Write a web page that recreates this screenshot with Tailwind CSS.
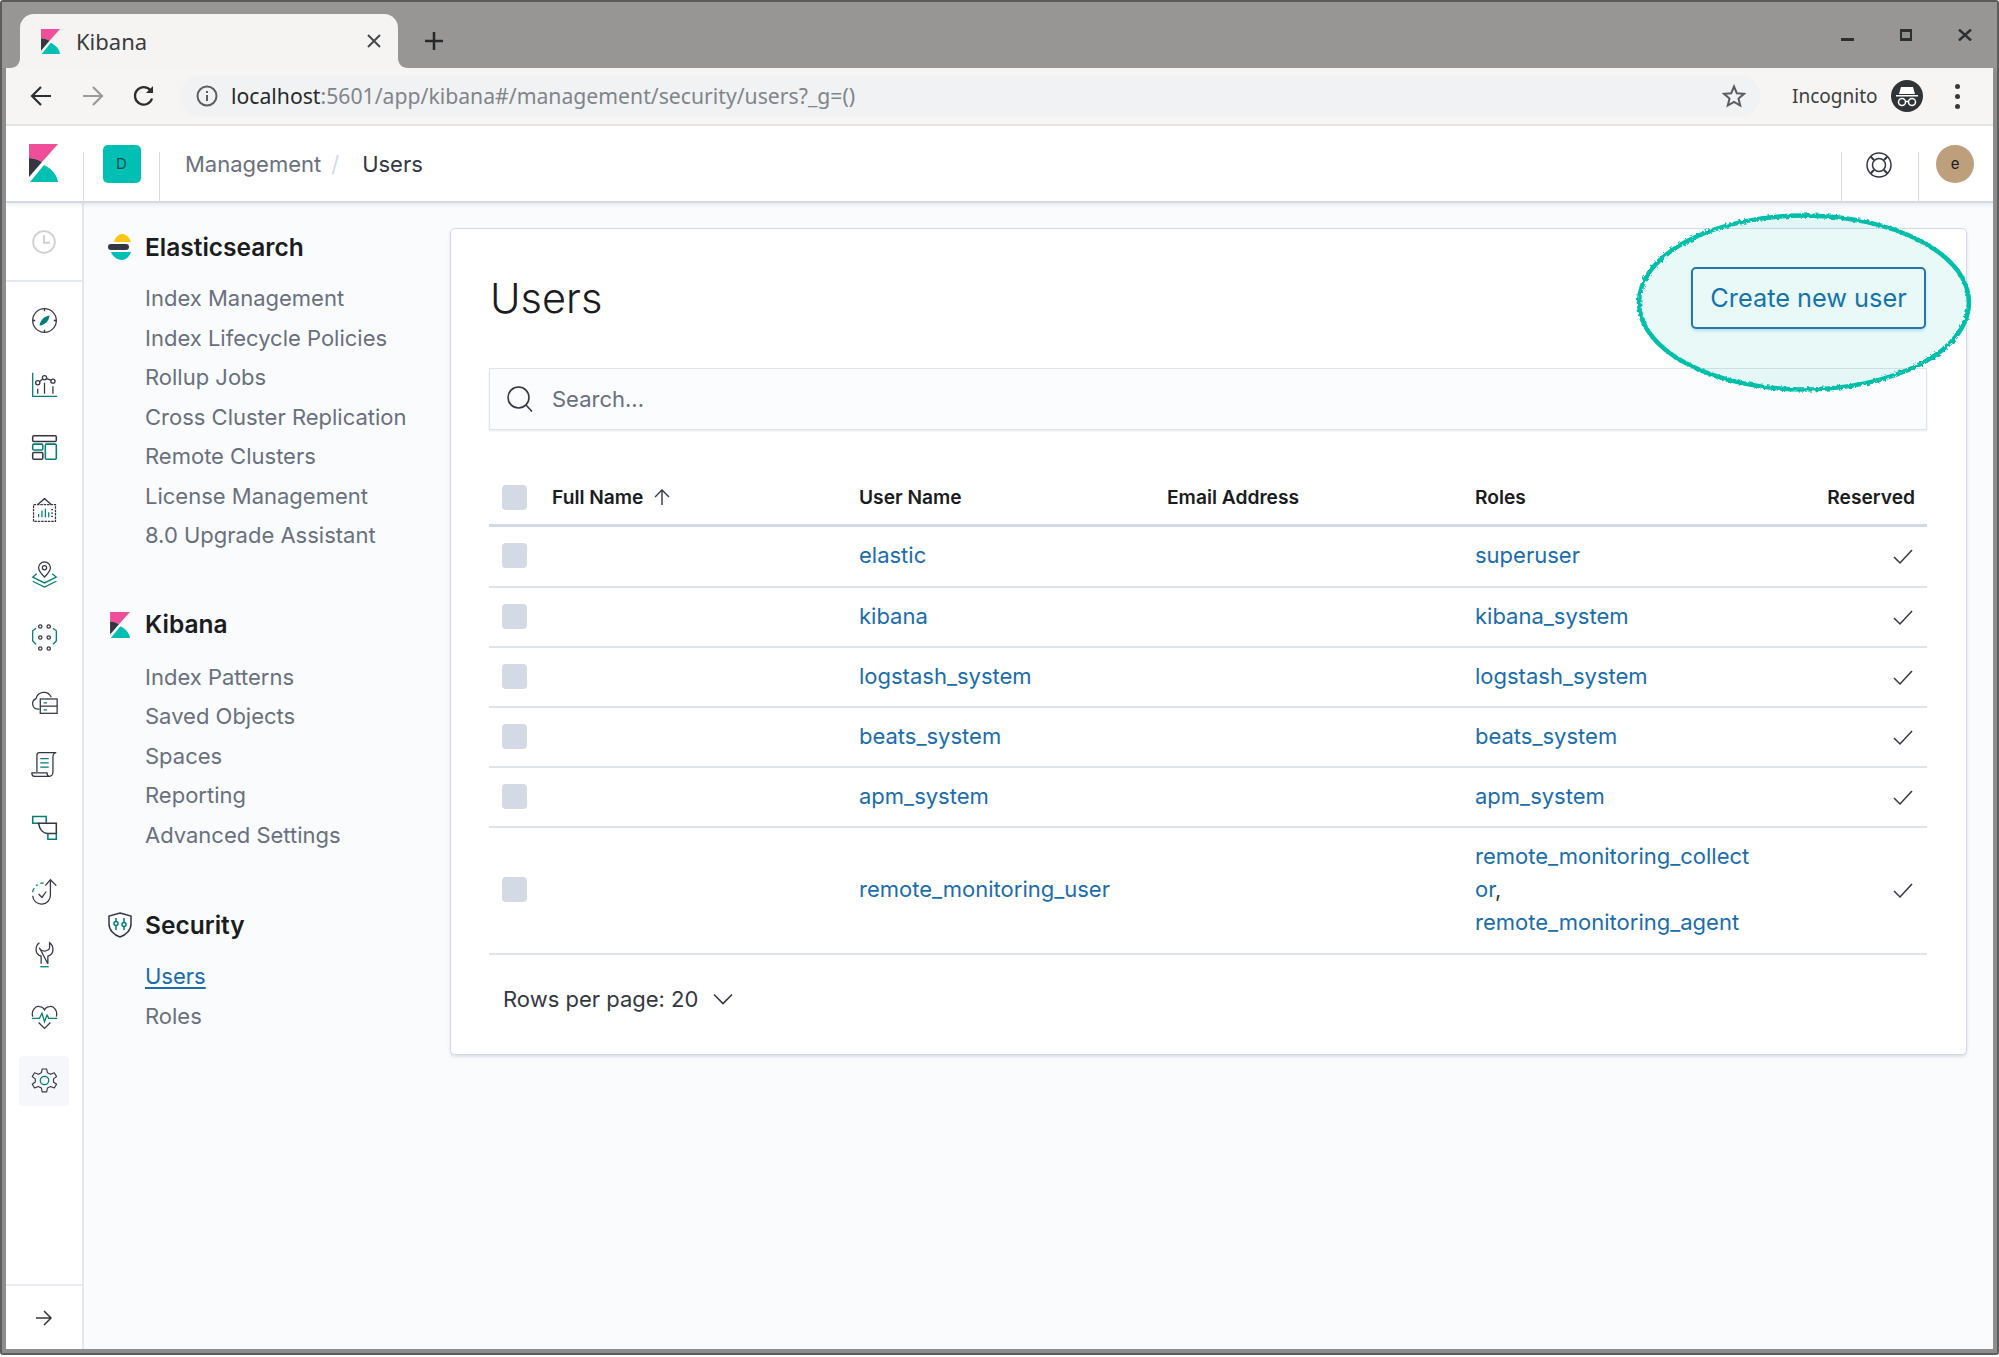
<!DOCTYPE html>
<html lang="en">
<head>
  <meta charset="UTF-8">
  <title>Kibana</title>
  <script src="https://cdn.jsdelivr.net/npm/@tailwindcss/browser@4"></script>
</head>
<body class="bg-white font-['Inter',sans-serif]">
<div class="relative w-[1999px] h-[1357px] overflow-hidden">

  <!-- Browser window -->
  <div class="w-[1999px] h-[1355px] border-2 border-[#5c5c5c] rounded-[3px]">
    <div class="h-full border-x-4 border-b-4 border-[#8d8d8d] flex flex-col bg-[#fafbfd]">

      <!-- Tab strip -->
      <div class="h-[66px] shrink-0 bg-[#979694] flex items-end -mx-[4px] pl-[18px] pr-[25px]">
        <div class="relative w-[378px] h-[54px] bg-[#f5f4f2] rounded-t-[14px] flex items-center pl-[21px] pr-[16px] font-['Noto_Sans',sans-serif]">
          <svg class="absolute -left-[10px] bottom-0 w-[10px] h-[10px]" viewBox="0 0 10 10"><path d="M10 0V10H0C6 10 10 6 10 0Z" fill="#f5f4f2"/></svg>
          <svg class="absolute -right-[10px] bottom-0 w-[10px] h-[10px]" viewBox="0 0 10 10"><path d="M0 0V10H10C4 10 0 6 0 0Z" fill="#f5f4f2"/></svg>
          <svg class="w-[19px] h-[25px]" viewBox="0 0 29 38"><path d="M0 0H29L13 18C9 15.500 5 14.500 0 14Z" fill="#f04e98"/><path d="M0 14C5 14.500 9 15.500 13 18L0 33Z" fill="#343741"/><path d="M1 38L15 21C23 25 28 31 29 38Z" fill="#00bfb3"/></svg>
          <span class="ml-[16px] text-[22px] text-[#3a3b3d]">Kibana</span>
          <svg class="ml-auto w-[16px] h-[16px]" viewBox="0 0 16 16" fill="none" stroke="#46484b" stroke-width="2"><path d="M2 2L14 14M14 2L2 14"/></svg>
        </div>
        <svg class="ml-[26px] mb-[17px] w-[20px] h-[20px]" viewBox="0 0 20 20" fill="none" stroke="#26282a" stroke-width="2.500"><path d="M10 1V19M1 10H19"/></svg>
        <div class="ml-auto self-start pt-[27px] flex items-start">
          <div class="w-[13px] h-[3px] bg-[#2d2e30] mt-[9px] mr-[46px]"></div>
          <div class="w-[12px] h-[12px] border-[3px] border-x-[2px] border-[#2d2e30] bg-[#8f8f8e] mr-[46px]"></div>
          <svg class="w-[14px] h-[12px]" viewBox="0 0 14 12" fill="none" stroke="#2d2e30" stroke-width="2.400"><path d="M1 0.500L13 11.500M13 0.500L1 11.500"/></svg>
        </div>
      </div>

      <!-- Toolbar -->
      <div class="h-[58px] shrink-0 bg-[#f6f5f3] border-b-2 border-[#e8e6e1] flex items-center pl-[24px] font-['Noto_Sans',sans-serif]">
        <svg class="w-[22px] h-[22px]" viewBox="0 0 22 22" fill="none" stroke="#2c2d2f" stroke-width="2.200"><path d="M21 11H2M11 2L2 11L11 20"/></svg>
        <svg class="ml-[30px] w-[22px] h-[22px]" viewBox="0 0 22 22" fill="none" stroke="#9a9a99" stroke-width="2.200"><path d="M1 11H20M11 2L20 11L11 20"/></svg>
        <svg class="ml-[28px] w-[24px] h-[24px]" viewBox="0 0 24 24" fill="none" stroke="#2c2d2f" stroke-width="2.300"><path d="M20 14.500A8.700 8.700 0 1 1 18.500 6.500"/><path d="M21 2V9H14" fill="#2c2d2f" stroke="none"/></svg>
        <div class="ml-[24px] w-[1581px] h-[42px] rounded-full bg-[#f1f2f3] flex items-center pl-[16px] pr-[15px]">
          <svg class="w-[22px] h-[22px]" viewBox="0 0 22 22" fill="none" stroke="#5b5e62" stroke-width="2"><circle cx="11" cy="11" r="9.500"/><path d="M11 10V16M11 6V8"/></svg>
          <span class="ml-[13px] text-[21.200px] text-[#27292b]">localhost<span class="text-[#80858a]">:5601/app/kibana#/management/security/users?_g=()</span></span>
          <svg class="ml-auto w-[24px] h-[24px]" viewBox="0 0 24 24" fill="none" stroke="#595c60" stroke-width="2"><path d="M12 2.500L14.800 9.200L22 9.800L16.500 14.500L18.200 21.500L12 17.800L5.800 21.500L7.500 14.500L2 9.800L9.200 9.200Z"/></svg>
        </div>
        <span class="ml-[31px] text-[19px] text-[#3c3e41]">Incognito</span>
        <svg class="ml-[14px] w-[32px] h-[32px]" viewBox="0 0 32 32"><circle cx="16" cy="16" r="16" fill="#303437"/><path d="M10 7H22L24 14H8Z" fill="#fff"/><path d="M5 15H27V16.500H5Z" fill="#fff"/><circle cx="11" cy="22" r="3.500" fill="none" stroke="#fff" stroke-width="1.500"/><circle cx="21" cy="22" r="3.500" fill="none" stroke="#fff" stroke-width="1.500"/><path d="M14 21.500H18" stroke="#fff" stroke-width="1.500"/></svg>
        <div class="ml-[32px] flex flex-col gap-[5px]">
          <div class="w-[5px] h-[5px] rounded-full bg-[#37393c]"></div>
          <div class="w-[5px] h-[5px] rounded-full bg-[#37393c]"></div>
          <div class="w-[5px] h-[5px] rounded-full bg-[#37393c]"></div>
        </div>
      </div>

      <!-- Kibana header -->
      <div class="h-[77px] shrink-0 bg-white border-b-2 border-[#d3dae6] flex items-stretch shadow-[0_2px_4px_rgba(152,162,179,0.2)] relative z-10">
        <div class="w-[77px] flex justify-center pt-[18px]">
          <svg class="w-[29px] h-[38px] -ml-[2px]" viewBox="0 0 29 38"><path d="M0 0H29L13 18C9 15.500 5 14.500 0 14Z" fill="#f04e98"/><path d="M0 14C5 14.500 9 15.500 13 18L0 33Z" fill="#343741"/><path d="M1 38L15 21C23 25 28 31 29 38Z" fill="#00bfb3"/></svg>
        </div>
        <div class="w-[77px] mt-[26px] border-x border-[#d3dae6] flex justify-center items-start">
          <div class="w-[38px] h-[38px] -mt-[7px] rounded-[5px] bg-[#00bfb3] flex items-center justify-center text-[15px] text-[#0d4f4a]">D</div>
        </div>
        <div class="flex items-center pl-[25px] pt-[2px] text-[22px]">
          <span class="text-[#69707d]">Management</span>
          <span class="ml-[10px] text-[#d3dae6]">/</span>
          <span class="ml-[23px] text-[#343741]">Users</span>
        </div>
        <div class="ml-auto w-[77px] mt-[26px] border-l border-[#d3dae6] flex justify-center items-start">
          <svg class="w-[26px] h-[26px] -ml-[3px]" viewBox="0 0 26 26" fill="none" stroke="#343741" stroke-width="1.500"><circle cx="13" cy="13" r="12"/><circle cx="13" cy="13" r="6.500"/><path d="M8 8L4.500 4.500M18 8L21.500 4.500M8 18L4.500 21.500M18 18L21.500 21.500" stroke-width="2"/></svg>
        </div>
        <div class="w-[75px] mt-[26px] border-l border-[#d3dae6] flex items-start pl-[17px]">
          <div class="w-[38px] h-[38px] shrink-0 -mt-[7px] rounded-full bg-[#bd9f7c] flex items-center justify-center text-[15px] text-[#1a1c21]">e</div>
        </div>
      </div>

      <div class="flex-1 flex min-h-0">

        <!-- Icon rail -->
        <div class="w-[78px] shrink-0 bg-white border-r-2 border-[#e3e7ef] flex flex-col items-center">
          <div class="w-full h-[79px] border-b-2 border-[#e3e7ef] flex items-center justify-center">
            <svg class="w-[24px] h-[24px]" viewBox="0 0 32 32" fill="none" stroke="#cfd1d4" stroke-width="2.500"><circle cx="16" cy="16" r="14.500"/><path d="M16 7V17H24"/></svg>
          </div>
          <div class="pt-[7px] flex flex-col items-center w-full">
            <!-- Discover -->
            <div class="h-[63.400px] flex items-center"><svg class="w-[27px] h-[27px]" viewBox="0 0 32 32" fill="none" stroke="#343741" stroke-width="1.500"><circle cx="16" cy="16" r="14"/><path d="M16 2V5M16 27V30M2 16H5M27 16H30"/><path d="M10 22C11 16 15 11 22 10C21 17 17 21 10 22Z" fill="#017d73" stroke="none"/></svg></div>
            <!-- Visualize -->
            <div class="h-[63.400px] flex items-center"><svg class="w-[27px] h-[27px]" viewBox="0 0 32 32" fill="none" stroke="#343741" stroke-width="1.500"><path d="M2 2V30H31" stroke="#017d73"/><circle cx="8" cy="14" r="2.500"/><circle cx="16" cy="8" r="2.500"/><circle cx="26" cy="12" r="2.500"/><path d="M10 12.500L14 9.500M18.500 9L24 11M8 21V27M16 14V27M26 18V27"/></svg></div>
            <!-- Dashboard -->
            <div class="h-[63.400px] flex items-center"><svg class="w-[27px] h-[27px]" viewBox="0 0 32 32" fill="none" stroke="#343741" stroke-width="1.800"><rect x="2" y="2" width="28" height="7" rx="1.500"/><rect x="2" y="12" width="12" height="7" rx="1.500" stroke="#017d73"/><rect x="2" y="22" width="12" height="8" rx="1.500"/><rect x="17" y="12" width="13" height="18" rx="1.500" stroke="#017d73"/></svg></div>
            <!-- Canvas -->
            <div class="h-[63.400px] flex items-center"><svg class="w-[27px] h-[27px]" viewBox="0 0 32 32" fill="none" stroke="#343741" stroke-width="1.500"><path d="M3 9H29V29H3Z" stroke-dasharray="3 1"/><path d="M8 9L16 2L24 9"/><path d="M9 24V20M13 24V16M17 24V14M21 24V18" stroke="#017d73"/><path d="M24 15H26M24 19H26M24 23H26"/></svg></div>
            <!-- Maps -->
            <div class="h-[63.400px] flex items-center"><svg class="w-[27px] h-[27px]" viewBox="0 0 32 32" fill="none" stroke="#343741" stroke-width="1.500"><path d="M16 19C11 14 9 11 9 8A7 7 0 0 1 23 8C23 11 21 14 16 19Z"/><circle cx="16" cy="8" r="2.500"/><path d="M7 15L2 19L16 26L30 19L25 15M2 24L16 31L30 24" stroke="#017d73"/></svg></div>
            <!-- Machine Learning -->
            <div class="h-[63.400px] flex items-center"><svg class="w-[27px] h-[27px]" viewBox="0 0 32 32" fill="none" stroke="#343741" stroke-width="1.500"><circle cx="11" cy="3" r="2"/><circle cx="21" cy="3" r="2"/><circle cx="11" cy="16" r="2"/><circle cx="21" cy="16" r="2"/><circle cx="11" cy="29" r="2"/><circle cx="21" cy="29" r="2"/><path d="M6 5L2 8V20L6 24M26 5L30 8V20L26 24" stroke="#017d73"/></svg></div>
            <!-- Infrastructure -->
            <div class="h-[63.400px] flex items-center"><svg class="w-[27px] h-[27px]" viewBox="0 0 32 32" fill="none" stroke="#343741" stroke-width="1.500"><path d="M10 25H8A6.500 6.500 0 0 1 6 12.500C8 4 20 2 24 11"/><rect x="11" y="13" width="20" height="17"/><path d="M11 21.500H31"/><path d="M15 17.500H19M15 26H19" stroke="#017d73"/></svg></div>
            <!-- Logs -->
            <div class="h-[63.400px] flex items-center"><svg class="w-[27px] h-[27px]" viewBox="0 0 32 32" fill="none" stroke="#343741" stroke-width="1.500"><path d="M7 25V5A3 3 0 0 1 10 2H30C27 2 26 4 26 8V25C26 28 24 30 22 30H4C2 30 1 28 1 26H19C19 28 20 30 22 30"/><path d="M11 9H21M11 14H21M11 19H21" stroke="#017d73"/></svg></div>
            <!-- APM -->
            <div class="h-[63.400px] flex items-center"><svg class="w-[27px] h-[27px]" viewBox="0 0 32 32" fill="none" stroke="#343741" stroke-width="1.800"><path d="M10 11H2V3H18V11" stroke="#017d73"/><path d="M9 11H30V23H20C14 23 10 18 9 11Z"/><path d="M20 23V30H30V23" stroke="#017d73"/></svg></div>
            <!-- Uptime -->
            <div class="h-[63.400px] flex items-center"><svg class="w-[27px] h-[27px]" viewBox="0 0 32 32" fill="none" stroke="#343741" stroke-width="1.500"><path d="M23 3V20A10.500 10.500 0 0 1 2 21"/><path d="M17 9L23 2L30 9"/><path d="M2 17C2 15 3 13 4 12M6 9L8 8M11 6H15" stroke="#017d73"/><path d="M9 19L13 23L18 16"/></svg></div>
            <!-- Dev Tools -->
            <div class="h-[63.400px] flex items-center"><svg class="w-[27px] h-[27px]" viewBox="0 0 32 32" fill="none" stroke="#343741" stroke-width="1.500"><path d="M10 2C7 4 6 7 6 10C6 14 9 17 12 18V27M20 27V18C23 17 26 14 26 10C26 7 25 4 22 2V8C22 10 19 12 16 12C13 12 10 10 10 8Z"/><path d="M11 30.500H21" stroke="#017d73"/></svg></div>
            <!-- Monitoring -->
            <div class="h-[63.400px] flex items-center"><svg class="w-[27px] h-[27px]" viewBox="0 0 32 32" fill="none" stroke="#343741" stroke-width="1.500"><path d="M2 15C0 8 5 2 10 3C13 3 15 5 16 7C17 5 19 3 22 3C27 2 32 8 30 15"/><path d="M1 17H10L13 11L16 21L19 13L21 17H31" stroke="#017d73"/><path d="M9 22L16 29L23 22"/></svg></div>
            <!-- Management -->
            <div class="h-[50px] mt-[6px] w-[50px] rounded-[4px] bg-[#f5f7fa] flex items-center justify-center"><svg class="w-[27px] h-[27px]" viewBox="0 0 32 32" fill="none" stroke="#343741" stroke-width="1.500"><path d="M13 1H19L20 6L24 8L29 6L32 11L28 14V18L32 21L29 26L24 24L20 26L19 31H13L12 26L8 24L3 26L0 21L4 18V14L0 11L3 6L8 8L12 6Z" stroke-linejoin="round" transform="translate(1.500 1.500) scale(.9)"/><circle cx="16" cy="16" r="5" stroke="#017d73"/></svg></div>
          </div>
          <div class="mt-auto w-full h-[65px] border-t-2 border-[#ebedf2] flex items-center justify-center">
            <svg class="w-[18px] h-[18px]" viewBox="0 0 18 18" fill="none" stroke="#343741" stroke-width="1.500"><path d="M1 9H16M9 2L16 9L9 16"/></svg>
          </div>
        </div>

        <!-- Side nav -->
        <div class="w-[366px] shrink-0 pl-[24px] pt-[24px]">
          <div class="h-[40px] flex items-center">
            <svg class="w-[24px] h-[26px]" viewBox="0 0 24 26"><path d="M6 8C7 3 11 0 14 0C17 0 21 2 23 8Z" fill="#fec514"/><rect x="0" y="10" width="21" height="6" rx="3" fill="#343741"/><path d="M3 18H23C21 23 18 26 14 26C9 26 5 23 3 18Z" fill="#00bfb3"/></svg>
            <span class="ml-[13px] text-[24.500px] font-semibold text-[#1a1c21]">Elasticsearch</span>
          </div>
          <div class="mt-[12px] pl-[37px] text-[22px] text-[#69707d] flex flex-col">
            <span class="h-[39.500px] leading-[39.500px]">Index Management</span>
            <span class="h-[39.500px] leading-[39.500px]">Index Lifecycle Policies</span>
            <span class="h-[39.500px] leading-[39.500px]">Rollup Jobs</span>
            <span class="h-[39.500px] leading-[39.500px]">Cross Cluster Replication</span>
            <span class="h-[39.500px] leading-[39.500px]">Remote Clusters</span>
            <span class="h-[39.500px] leading-[39.500px]">License Management</span>
            <span class="h-[39.500px] leading-[39.500px]">8.0 Upgrade Assistant</span>
          </div>
          <div class="mt-[49px] h-[40px] flex items-center">
            <svg class="w-[22px] h-[26px] ml-[1px]" viewBox="0 0 29 38"><path d="M0 0H29L13 18C9 15.500 5 14.500 0 14Z" fill="#f04e98"/><path d="M0 14C5 14.500 9 15.500 13 18L0 33Z" fill="#343741"/><path d="M1 38L15 21C23 25 28 31 29 38Z" fill="#00bfb3"/></svg>
            <span class="ml-[14px] text-[24.500px] font-semibold text-[#1a1c21]">Kibana</span>
          </div>
          <div class="mt-[13px] pl-[37px] text-[22px] text-[#69707d] flex flex-col">
            <span class="h-[39.500px] leading-[39.500px]">Index Patterns</span>
            <span class="h-[39.500px] leading-[39.500px]">Saved Objects</span>
            <span class="h-[39.500px] leading-[39.500px]">Spaces</span>
            <span class="h-[39.500px] leading-[39.500px]">Reporting</span>
            <span class="h-[39.500px] leading-[39.500px]">Advanced Settings</span>
          </div>
          <div class="mt-[50px] h-[40px] flex items-center">
            <svg class="w-[24px] h-[26px]" viewBox="0 0 24 26" fill="none" stroke="#343741" stroke-width="1.500"><path d="M12 1L23 4V12C23 18 18 23 12 25C6 23 1 18 1 12V4Z"/><path d="M8 6V9M8 14V18M16 6V10M16 15V18" stroke="#017d73"/><circle cx="8" cy="11.500" r="2" stroke="#017d73"/><circle cx="16" cy="12.500" r="2" stroke="#017d73"/></svg>
            <span class="ml-[13px] text-[24.500px] font-semibold text-[#1a1c21]">Security</span>
          </div>
          <div class="mt-[12px] pl-[37px] text-[22px] text-[#69707d] flex flex-col">
            <span class="h-[39.500px] leading-[39.500px] text-[#1a6cab] underline underline-offset-[3px]">Users</span>
            <span class="h-[39.500px] leading-[39.500px]">Roles</span>
          </div>
        </div>

        <!-- Panel -->
        <div class="w-[1517px] h-[827px] shrink-0 mt-[25px] bg-white border border-[#d3dae6] rounded-[5px] shadow-[0_2px_3px_rgba(152,162,179,0.3)] px-[40px] pt-[38px]">
          <div class="flex items-center justify-between h-[62px]">
            <h1 class="-ml-[1px] text-[41.500px] font-light text-[#1a1c21]">Users</h1>
            <button class="w-[235px] h-[62px] rounded-[5px] border-2 border-[#2a6fa8] text-[25.300px] text-[#1a6cab] shadow-[0_2px_3px_rgba(0,107,180,0.2)]">Create new user</button>
          </div>
          <div class="mt-[39px] w-[1438px] -ml-[2px] h-[62px] bg-[#fbfcfd] border border-[#e0e3e9] shadow-[0_1px_2px_rgba(152,162,179,0.25)] flex items-center pl-[17px] text-[22px] text-[#69707d]">
            <svg class="w-[26px] h-[26px]" viewBox="0 0 26 26" fill="none" stroke="#343741" stroke-width="1.600"><circle cx="11.500" cy="11.500" r="10.500"/><path d="M19 19L25 25.500"/></svg>
            <span class="ml-[19px]">Search...</span>
          </div>
          <table class="mt-[35px] w-[1438px] -ml-[2px] table-fixed text-[22px] text-[#1a6cab] border-collapse">
            <colgroup>
              <col class="w-[52px]">
              <col class="w-[307px]">
              <col class="w-[308px]">
              <col class="w-[308px]">
              <col class="w-[307px]">
              <col class="w-[156px]">
            </colgroup>
            <thead>
              <tr class="h-[60px] border-b-[3px] border-[#d3dae6] text-[19.200px] font-semibold text-[#1a1c21] text-left">
                <th class="pl-[13px] pt-[6px]"><div class="w-[25px] h-[25px] rounded-[4px] bg-[#d3dae6]"></div></th>
                <th class="px-[11px] pt-[6px] font-semibold"><span class="inline-flex items-center gap-[10px]">Full Name <svg class="w-[18px] h-[18px]" viewBox="0 0 18 18" fill="none" stroke="#343741" stroke-width="1.400"><path d="M9 17V2M2 9L9 2L16 9"/></svg></span></th>
                <th class="px-[11px] pt-[6px] font-semibold">User Name</th>
                <th class="px-[11px] pt-[6px] font-semibold">Email Address</th>
                <th class="px-[11px] pt-[6px] font-semibold">Roles</th>
                <th class="px-[12px] pt-[6px] font-semibold text-right">Reserved</th>
              </tr>
            </thead>
            <tbody class="[&_td]:pb-[2px]">
              <tr class="h-[62px] border-b-2 border-[#dfe3ea]">
                <td class="pl-[13px]"><div class="w-[25px] h-[25px] rounded-[4px] bg-[#d3dae6]"></div></td>
                <td class="px-[11px]"></td><td class="px-[11px]">elastic</td><td class="px-[11px]"></td><td class="px-[11px]">superuser</td>
                <td class="pr-[14px] text-right"><svg class="inline w-[20px] h-[16px]" viewBox="0 0 20 16" fill="none" stroke="#343741" stroke-width="1.500"><path d="M1 8L7 14L19 1"/></svg></td>
              </tr>
              <tr class="h-[60px] border-b-2 border-[#dfe3ea]">
                <td class="pl-[13px]"><div class="w-[25px] h-[25px] rounded-[4px] bg-[#d3dae6]"></div></td>
                <td class="px-[11px]"></td><td class="px-[11px]">kibana</td><td class="px-[11px]"></td><td class="px-[11px]">kibana_system</td>
                <td class="pr-[14px] text-right"><svg class="inline w-[20px] h-[16px]" viewBox="0 0 20 16" fill="none" stroke="#343741" stroke-width="1.500"><path d="M1 8L7 14L19 1"/></svg></td>
              </tr>
              <tr class="h-[60px] border-b-2 border-[#dfe3ea]">
                <td class="pl-[13px]"><div class="w-[25px] h-[25px] rounded-[4px] bg-[#d3dae6]"></div></td>
                <td class="px-[11px]"></td><td class="px-[11px]">logstash_system</td><td class="px-[11px]"></td><td class="px-[11px]">logstash_system</td>
                <td class="pr-[14px] text-right"><svg class="inline w-[20px] h-[16px]" viewBox="0 0 20 16" fill="none" stroke="#343741" stroke-width="1.500"><path d="M1 8L7 14L19 1"/></svg></td>
              </tr>
              <tr class="h-[60px] border-b-2 border-[#dfe3ea]">
                <td class="pl-[13px]"><div class="w-[25px] h-[25px] rounded-[4px] bg-[#d3dae6]"></div></td>
                <td class="px-[11px]"></td><td class="px-[11px]">beats_system</td><td class="px-[11px]"></td><td class="px-[11px]">beats_system</td>
                <td class="pr-[14px] text-right"><svg class="inline w-[20px] h-[16px]" viewBox="0 0 20 16" fill="none" stroke="#343741" stroke-width="1.500"><path d="M1 8L7 14L19 1"/></svg></td>
              </tr>
              <tr class="h-[60px] border-b-2 border-[#dfe3ea]">
                <td class="pl-[13px]"><div class="w-[25px] h-[25px] rounded-[4px] bg-[#d3dae6]"></div></td>
                <td class="px-[11px]"></td><td class="px-[11px]">apm_system</td><td class="px-[11px]"></td><td class="px-[11px]">apm_system</td>
                <td class="pr-[14px] text-right"><svg class="inline w-[20px] h-[16px]" viewBox="0 0 20 16" fill="none" stroke="#343741" stroke-width="1.500"><path d="M1 8L7 14L19 1"/></svg></td>
              </tr>
              <tr class="h-[127px] border-b-2 border-[#dfe3ea]">
                <td class="pl-[13px]"><div class="w-[25px] h-[25px] rounded-[4px] bg-[#d3dae6]"></div></td>
                <td class="px-[11px]"></td><td class="px-[11px]">remote_monitoring_user</td><td class="px-[11px]"></td>
                <td class="px-[11px] leading-[33px]">remote_monitoring_collect<br>or<span class="text-[#343741]">,</span><br>remote_monitoring_agent</td>
                <td class="pr-[14px] text-right"><svg class="inline w-[20px] h-[16px]" viewBox="0 0 20 16" fill="none" stroke="#343741" stroke-width="1.500"><path d="M1 8L7 14L19 1"/></svg></td>
              </tr>
            </tbody>
          </table>
          <div class="mt-[27px] ml-[12px] h-[34px] flex items-center text-[22px] text-[#343741]">
            Rows per page: 20
            <svg class="ml-[15px] w-[20px] h-[12px]" viewBox="0 0 20 12" fill="none" stroke="#343741" stroke-width="1.600"><path d="M1 1.500L10 10.500L19 1.500"/></svg>
          </div>
        </div>
      </div>
    </div>
  </div>

  <!-- Hand-drawn highlight around the button -->
  <svg class="absolute left-[1627px] top-[204px] w-[354px] h-[197px] pointer-events-none" viewBox="0 0 354 197" fill="none">
    <defs>
      <filter id="rough" x="-5%" y="-5%" width="110%" height="110%">
        <feTurbulence type="fractalNoise" baseFrequency="0.35" numOctaves="2" seed="4"/>
        <feDisplacementMap in="SourceGraphic" scale="4"/>
      </filter>
    </defs>
    <ellipse cx="177" cy="98.500" rx="165" ry="87" fill="#00bfb3" fill-opacity="0.09" stroke="#00bfa8" stroke-width="4.500" filter="url(#rough)"/>
  </svg>
</div>
</body>
</html>
